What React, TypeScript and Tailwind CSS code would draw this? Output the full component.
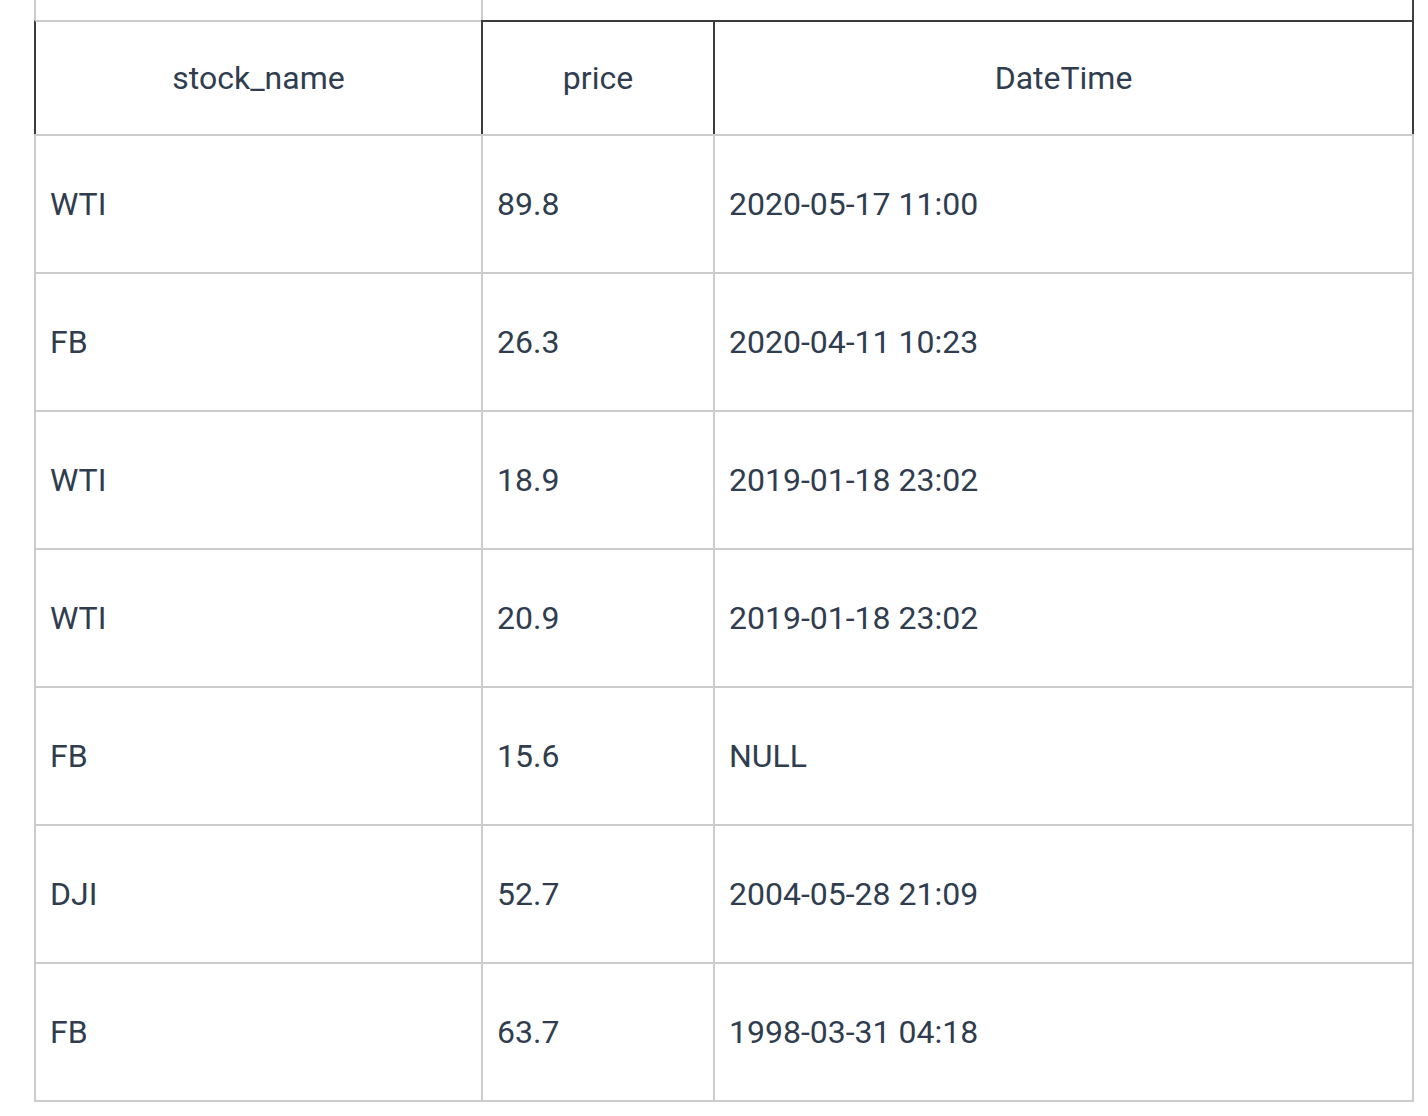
import React from "react";

const rows: [string, string, string][] = [
  ["WTI", "89.8", "2020-05-17 11:00"],
  ["FB", "26.3", "2020-04-11 10:23"],
  ["WTI", "18.9", "2019-01-18 23:02"],
  ["WTI", "20.9", "2019-01-18 23:02"],
  ["FB", "15.6", "NULL"],
  ["DJI", "52.7", "2004-05-28 21:09"],
  ["FB", "63.7", "1998-03-31 04:18"],
];

export default function App() {
  return (
    <div
      className="w-[1428px] h-[1116px] bg-white overflow-hidden"
      style={{ fontFamily: "Roboto, 'Liberation Sans', sans-serif" }}
    >
      <div className="ml-[34px] w-[1380px] text-[32px] text-[#303d4f]">
        {/* partial row above */}
        <div className="grid grid-cols-[447px_933px] h-[20px]">
          <div className="border-l-2 border-[#cccccc]" />
          <div className="border-l-2 border-r-2 border-l-[#cccccc] border-r-[#404040]" />
        </div>
        {/* header */}
        <div className="grid grid-cols-[447px_232px_701px] h-[114px]">
          <div className="border-t-2 border-l-2 border-t-[#cccccc] border-l-[#3c3c3c] flex items-center justify-center">
            stock_name
          </div>
          <div className="border-t-2 border-l-2 border-[#3c3c3c] flex items-center justify-center">
            price
          </div>
          <div className="border-t-2 border-l-2 border-r-2 border-[#3c3c3c] flex items-center justify-center">
            DateTime
          </div>
        </div>
        {rows.map((r, i) => (
          <div
            key={i}
            className={
              i === rows.length - 1
                ? "grid grid-cols-[447px_232px_701px] h-[140px] border-t-2 border-b-2 border-[#cccccc]"
                : "grid grid-cols-[447px_232px_701px] h-[138px] border-t-2 border-[#cccccc]"
            }
          >
            <div className="border-l-2 border-[#cccccc] flex items-center pl-[14px]">{r[0]}</div>
            <div className="border-l-2 border-[#cccccc] flex items-center pl-[14px]">{r[1]}</div>
            <div className="border-l-2 border-r-2 border-[#cccccc] flex items-center pl-[14px]">{r[2]}</div>
          </div>
        ))}
      </div>
    </div>
  );
}
